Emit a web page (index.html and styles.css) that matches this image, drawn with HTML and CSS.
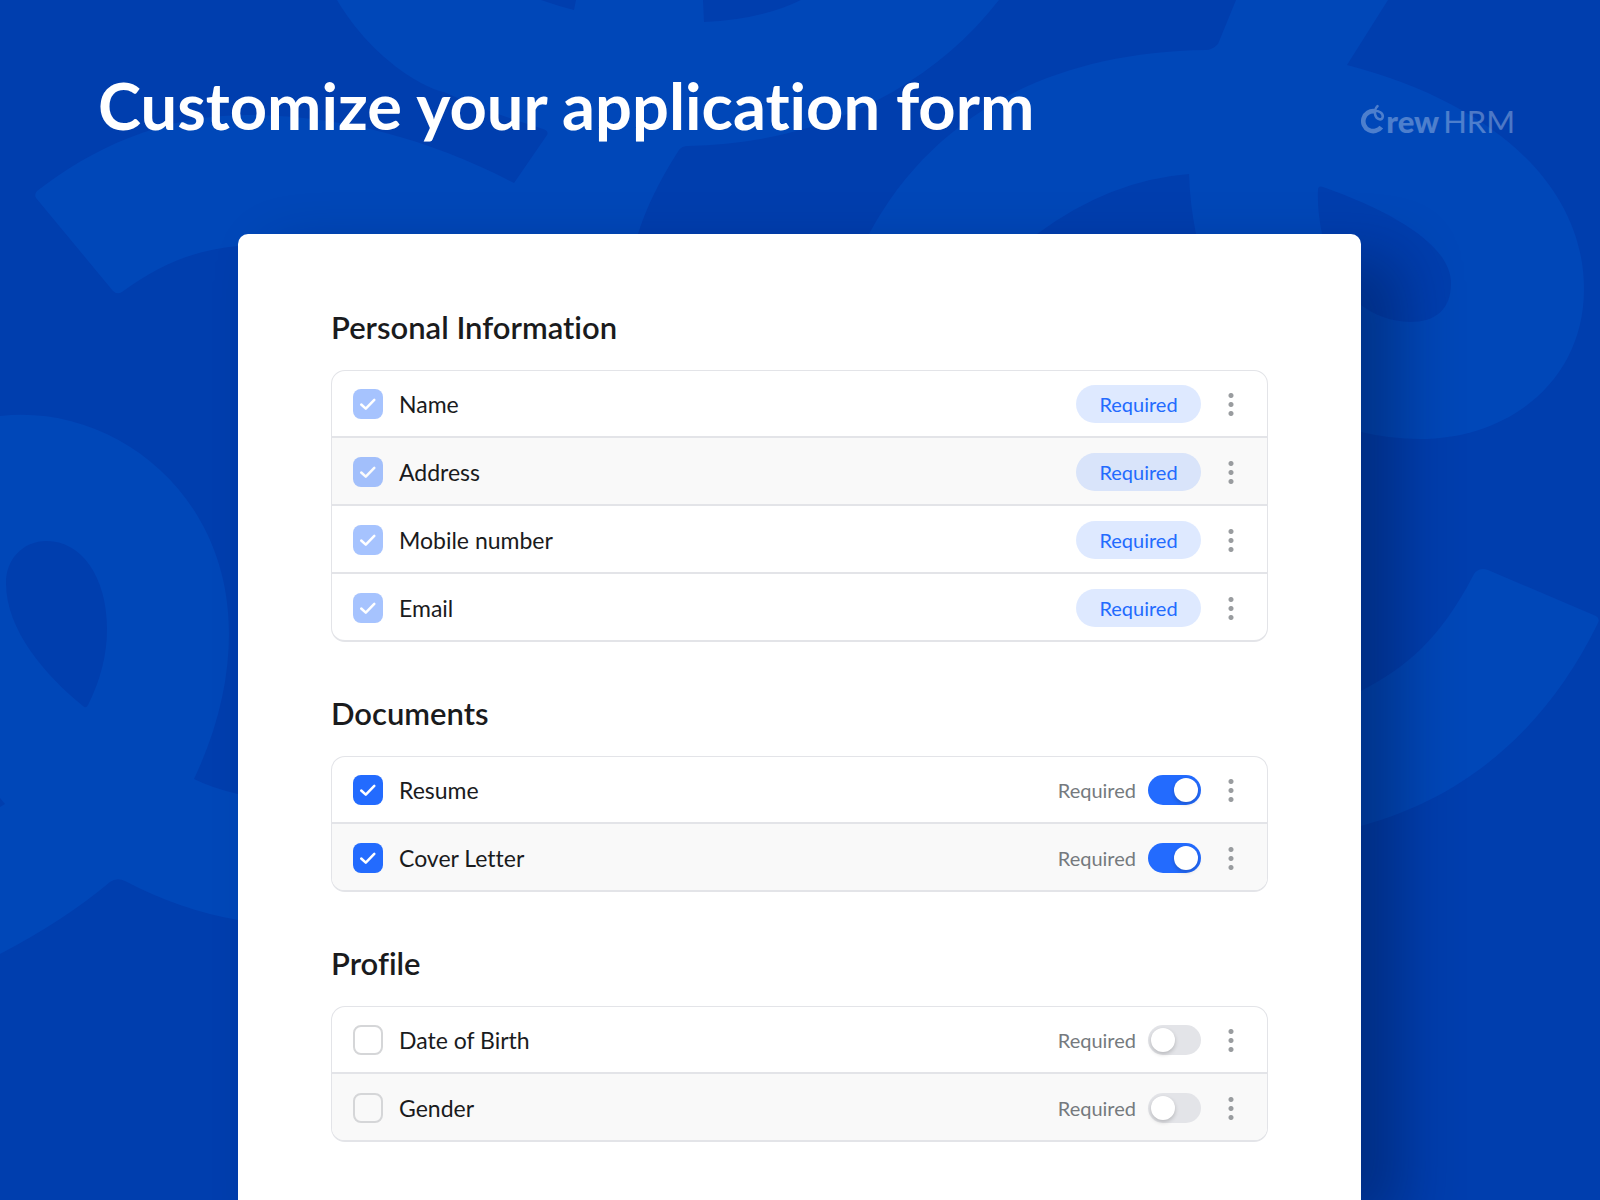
FILE: index.html
```html
<!DOCTYPE html>
<html lang="en">
<head>
<meta charset="utf-8">
<title>Crew HRM – Customize your application form</title>
<link rel="stylesheet" href="styles.css">
</head>
<body>
<svg class="backdrop" viewBox="0 0 1600 1200" preserveAspectRatio="xMidYMin slice" aria-hidden="true">
  <g fill="#0047b8" fill-rule="evenodd">
    <path d="M337 0C375 64 430 90 444 92Q490 113 543 129Q549 131 547 135L514 183C430 139 340 115 247 115C160 115 90 150 37 191Q34 194 36 198L113 291Q117 295 122 292C160 264 195 250 238 246L400 300L638 234Q650 195 679 150Q682 146 688 146C810 144 925 95 999 0ZM541 0Q558 6 574 10L576 0ZM703 0L704 22Q760 20 801 0Z"/>
    <path d="M869 234C930 120 1045 52 1206 50Q1212 50 1218 44L1236 0H1388L1347 65C1500 105 1584 190 1584 289C1584 380 1510 439 1420 439Q1390 439 1361 432L1100 400ZM1037 234Q1110 180 1189 174Q1190 205 1196 234ZM1322 234Q1317 208 1318 190Q1318 185 1323 187C1405 216 1451 250 1451 283C1451 310 1435 322 1410 322Q1382 321 1361 305Z"/>
    <path d="M0 416C110 403 229 490 229 633Q229 705 194 779Q212 788 238 794V920Q180 910 125 881Q117 877 110 882Q65 920 0 954V807L5 804L0 798ZM83 706C45 675 6 630 6 583C6 560 22 541 47 541C80 541 107 575 107 629Q107 667 88 705Q86 709 83 706Z"/>
    <path d="M1361 691C1405 668 1440 640 1474 574Q1479 567 1488 570L1596 616Q1601 619 1597 625C1550 720 1475 795 1361 826Z"/>
  </g>
</svg>
<main class="page">
  <header class="header">
    <h1 class="title">Customize your application form</h1>
    <div class="logo">
      <svg class="logo-mark" viewBox="0 0 25 30" width="25" height="30" fill="none" stroke="currentColor" stroke-linecap="round" aria-label="C" role="img">
        <path stroke-width="4.600" stroke-linecap="butt" d="M13.500 7.200A10 10 0 1 0 20.300 23.100"/>
        <path stroke-width="2.600" d="M16.500 2.200C14.200 4.500 13.500 8 14.200 10.800C15.500 16 21.500 17 21.800 12.500C21.800 9 18 6.500 13 6.800"/>
      </svg>
      <span class="logo-rew">rew</span>
      <span class="logo-hrm">HRM</span>
    </div>
  </header>
  <form class="panel">
    <section class="section">
      <h2 class="heading">Personal Information</h2>
      <ul class="card">
        <li class="row"><label class="field"><input class="check" type="checkbox" checked disabled>Name</label><span class="pill">Required</span><button class="more" type="button" aria-label="More options for Name"></button></li>
        <li class="row row-alt"><label class="field"><input class="check" type="checkbox" checked disabled>Address</label><span class="pill">Required</span><button class="more" type="button" aria-label="More options for Address"></button></li>
        <li class="row"><label class="field"><input class="check" type="checkbox" checked disabled>Mobile number</label><span class="pill">Required</span><button class="more" type="button" aria-label="More options for Mobile number"></button></li>
        <li class="row"><label class="field"><input class="check" type="checkbox" checked disabled>Email</label><span class="pill">Required</span><button class="more" type="button" aria-label="More options for Email"></button></li>
      </ul>
    </section>
    <section class="section">
      <h2 class="heading">Documents</h2>
      <ul class="card">
        <li class="row"><label class="field"><input class="check" type="checkbox" checked>Resume</label><label class="switch">Required<input class="toggle" type="checkbox" role="switch" checked></label><button class="more" type="button" aria-label="More options for Resume"></button></li>
        <li class="row row-alt"><label class="field"><input class="check" type="checkbox" checked>Cover Letter</label><label class="switch">Required<input class="toggle" type="checkbox" role="switch" checked></label><button class="more" type="button" aria-label="More options for Cover Letter"></button></li>
      </ul>
    </section>
    <section class="section">
      <h2 class="heading">Profile</h2>
      <ul class="card">
        <li class="row"><label class="field"><input class="check" type="checkbox">Date of Birth</label><label class="switch">Required<input class="toggle" type="checkbox" role="switch"></label><button class="more" type="button" aria-label="More options for Date of Birth"></button></li>
        <li class="row row-alt"><label class="field"><input class="check" type="checkbox">Gender</label><label class="switch">Required<input class="toggle" type="checkbox" role="switch"></label><button class="more" type="button" aria-label="More options for Gender"></button></li>
      </ul>
    </section>
  </form>
</main>
</body>
</html>
```
FILE: styles.css
```css
* { box-sizing: border-box; }

body {
  margin: 0;
  background: #003eae;
  color: #1a1b1d;
  font-family: Lato, "Open Sans", sans-serif;
  font-variant-ligatures: no-common-ligatures;
}

.backdrop {
  position: absolute;
  inset: 0;
  width: 100%;
  height: 100%;
}

.page {
  position: relative;
  display: flex;
  flex-direction: column;
  min-height: 100vh;
}

.header {
  display: flex;
  justify-content: space-between;
  align-items: flex-start;
  height: 234px;
  padding: 67px 85px 0 98px;
}

.title {
  margin: 0;
  color: #fff;
  font-size: 65px;
  line-height: 76px;
  font-weight: 700;
}

.logo {
  display: flex;
  margin-top: 34px;
  color: #fff;
  font-size: 31px;
  line-height: 40px;
  opacity: 0.3;
}

.logo-mark { margin-top: 3px; }
.logo-rew { margin-right: 4px; font-weight: 900; }
.logo-hrm { font-weight: 400; }

.panel {
  display: flex;
  flex: 1;
  flex-direction: column;
  gap: 54px;
  margin: 0 239px 0 238px;
  padding: 76px 93px 56px;
  background: #fff;
  border-radius: 10px 10px 0 0;
  box-shadow: 40px 24px 60px rgba(0, 15, 50, 0.34);
}

.heading {
  margin: 0 0 26px;
  font-size: 31px;
  line-height: 34px;
  font-weight: 600;
}

.card {
  margin: 0;
  padding: 0;
  list-style: none;
  border: 1px solid #e3e4e8;
  border-bottom-width: 2px;
  border-radius: 14px;
  overflow: hidden;
}

.row {
  display: flex;
  align-items: center;
  height: 68px;
  padding: 2px 24px 0 21px;
  border-bottom: 2px solid #e3e4e8;
}

.row:first-child { height: 67px; padding-top: 1px; }
.row:last-child { height: 66px; border-bottom: 0; }
.row-alt { background: #f9f9f9; }

.field {
  display: flex;
  flex: 1;
  align-items: center;
  gap: 16px;
  font-size: 23px;
  line-height: 30px;
}

.check {
  appearance: none;
  width: 30px;
  height: 30px;
  margin: 0;
  border: 2px solid #d5d6d8;
  border-radius: 8px;
}

.check:checked {
  border: 0;
  background: #236bfe url("data:image/svg+xml,%3Csvg xmlns='http://www.w3.org/2000/svg' viewBox='0 0 31 31' fill='none' stroke='white' stroke-width='2.600' stroke-linecap='round' stroke-linejoin='round'%3E%3Cpath d='M8.500 16l4.700 4.300 8.800-9'/%3E%3C/svg%3E");
}

.check:disabled { opacity: 0.4; }

.pill {
  width: 125px;
  border-radius: 19px;
  background: rgba(35, 107, 254, 0.15);
  color: #236bfe;
  font-size: 20px;
  line-height: 38px;
  text-align: center;
}

.switch {
  display: flex;
  align-items: center;
  gap: 12px;
  color: #757a7e;
  font-size: 20px;
  line-height: 30px;
}

.toggle {
  appearance: none;
  display: flex;
  width: 53px;
  height: 30px;
  margin: 0;
  padding: 3px;
  border-radius: 15px;
  background: #e3e4e8;
}

.toggle::before {
  content: "";
  width: 24px;
  height: 24px;
  border-radius: 50%;
  background: #fff;
  box-shadow: 0 2px 4px rgba(0, 0, 0, 0.2);
}

.toggle:checked { justify-content: flex-end; background: #236bfe; }

.more {
  width: 24px;
  height: 32px;
  margin-left: 18px;
  padding: 0;
  border: 0;
  background: radial-gradient(circle, #999c9f 2px, transparent 3px) 0 3px / 24px 9px no-repeat,
    radial-gradient(circle, #999c9f 2px, transparent 3px) 0 12px / 24px 9px no-repeat,
    radial-gradient(circle, #999c9f 2px, transparent 3px) 0 21px / 24px 9px no-repeat;
}
```
